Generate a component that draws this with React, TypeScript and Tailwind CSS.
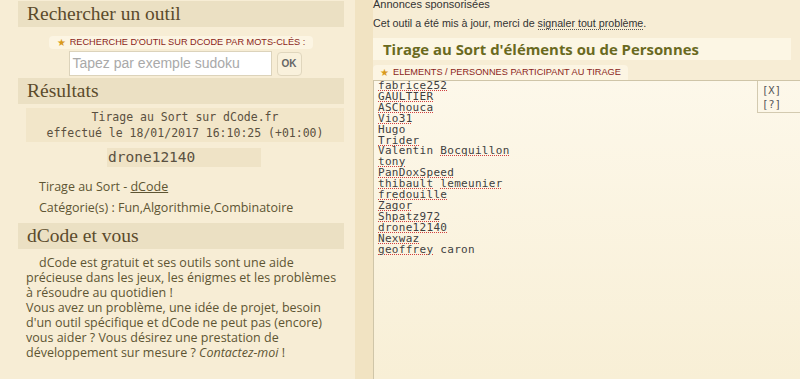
import React from "react";

const names: { w: string; bad?: boolean }[][] = [
  [{ w: "fabrice252", bad: true }],
  [{ w: "GAULTIER", bad: true }],
  [{ w: "ASChouca", bad: true }],
  [{ w: "Vio31", bad: true }],
  [{ w: "Hugo" }],
  [{ w: "Trider", bad: true }],
  [{ w: "Valentin" }, { w: "Bocquillon", bad: true }],
  [{ w: "tony", bad: true }],
  [{ w: "PanDoxSpeed", bad: true }],
  [{ w: "thibault", bad: true }, { w: "lemeunier", bad: true }],
  [{ w: "fredouille", bad: true }],
  [{ w: "Zagor", bad: true }],
  [{ w: "Shpatz972", bad: true }],
  [{ w: "drone12140", bad: true }],
  [{ w: "Nexwaz", bad: true }],
  [{ w: "geoffrey", bad: true }, { w: "caron" }],
];

function Header({ children }: { children: React.ReactNode }) {
  return (
    <div className="h-[26px] bg-[#ebe0c3] pl-[9px] text-[19.5px] leading-[26px] text-[#5b4b2c] [font-family:'Liberation_Serif',serif]">
      {children}
    </div>
  );
}

function Star() {
  return <span className="text-[#d99a1c] text-[10px] mr-[4px]">★</span>;
}

export default function App() {
  return (
    <div className="w-[800px] h-[379px] overflow-hidden flex bg-[#f7edd5] [font-family:'Open_Sans',sans-serif]">
      {/* Left column */}
      <div className="w-[355px] shrink-0 pl-[18px] pr-[11px] pt-px">
        <Header>Rechercher un outil</Header>

        <div className="flex flex-col items-center mt-[9px]">
          <div className="bg-[#fcf5e3] rounded-[4px] px-[8px] h-[13px] flex items-center text-[9.2px] text-[#8b1f1a] [font-family:'Liberation_Sans',sans-serif] uppercase">
            <Star />
            Recherche d'outil sur dCode par mots-clés :
          </div>
          <div className="flex items-center gap-[5px] mt-[2px] ml-[8px]">
            <div className="w-[203px] h-[25px] bg-white border border-[#dcd3bb] flex items-center pl-[3px] text-[14px] text-[#a9a9a9] [font-family:'Liberation_Sans',sans-serif]">
              Tapez par exemple sudoku
            </div>
            <div className="w-[25px] h-[24px] rounded-[4px] border border-[#e0d6bd] bg-[#f9f1dc] flex items-center justify-center text-[10px] font-bold text-[#666] [font-family:'Liberation_Sans',sans-serif]">
              OK
            </div>
          </div>
        </div>

        <div className="mt-[2px]">
          <Header>Résultats</Header>
        </div>

        <div className="ml-[8px] mt-[4px] h-[34px] bg-[#f2e6c9] flex flex-col items-center justify-center text-[11.5px] leading-[16px] text-[#5a5040] [font-family:'DejaVu_Sans_Mono',monospace]">
          <div>Tirage au Sort sur dCode.fr</div>
          <div>effectué le 18/01/2017 16:10:25 (+01:00)</div>
        </div>

        <div className="ml-[89px] mt-[6px] w-[154px] h-[19px] bg-[#efe3c6] pl-[1px] text-[14.5px] leading-[19px] text-[#5a5040] [font-family:'DejaVu_Sans_Mono',monospace]">
          drone12140
        </div>

        <div className="pl-[21px] mt-[9px] text-[12.5px] text-[#5e5533] leading-[21px]">
          <div>
            Tirage au Sort - <span className="underline">dCode</span>
          </div>
          <div>Catégorie(s) : Fun,Algorithmie,Combinatoire</div>
        </div>

        <div className="mt-[5px]">
          <Header>dCode et vous</Header>
        </div>

        <p className="pl-[8px] mt-[6px] text-[12.5px] leading-[15px] text-[#5e5533] indent-[13px]">
          dCode est gratuit et ses outils sont une aide précieuse dans les jeux, les énigmes et les problèmes à résoudre au quotidien !
          <br />
          <span className="inline-block indent-0">
            Vous avez un problème, une idée de projet, besoin d'un outil spécifique et dCode ne peut pas (encore) vous aider ? Vous désirez une prestation de développement sur mesure ? <i>Contactez-moi</i> !
          </span>
        </p>
      </div>

      {/* Separator strip */}
      <div className="w-[18px] shrink-0 bg-[#f1e3c2]" />

      {/* Right column */}
      <div className="flex-1 min-w-0 flex flex-col">
        <div className="mt-[-2px] text-[11px] leading-[13px] text-[#333] [font-family:'Liberation_Sans',sans-serif]">
          Annonces sponsorisées
        </div>
        <div className="mt-[6px] text-[10.7px] leading-[13px] text-[#333] [font-family:'Liberation_Sans',sans-serif]">
          Cet outil a été mis à jour, merci de{" "}
          <span className="border-b border-dotted border-[#555]">signaler tout problème</span>.
        </div>

        <div className="mt-[8px] w-[418px] h-[22px] bg-[#fcf6e4] pl-[10px] text-[14.9px] font-bold leading-[22px] text-[#6a6a1f]">
          Tirage au Sort d'éléments ou de Personnes
        </div>

        <div className="mt-[5px] self-start bg-[#fcf5e3] rounded-t-[4px] px-[7px] h-[15px] flex items-center text-[9.2px] text-[#8b1f1a] [font-family:'Liberation_Sans',sans-serif] uppercase">
          <Star />
          Elements / Personnes participant au tirage
        </div>

        <div className="flex-1 relative border-t border-l border-[#cfc5a8] bg-linear-to-b from-[#fdf8ea] to-[#f8efd6] pl-[4px] pt-0 text-[11px] tracking-[0.3px] leading-[10.9px] text-[#3f3f3f] [font-family:'DejaVu_Sans_Mono',monospace]">
          {names.map((line, i) => (
            <div key={i} className="whitespace-pre">
              {line.map((t, j) => (
                <React.Fragment key={j}>
                  {j > 0 && " "}
                  {t.bad ? (
                    <span className="underline decoration-dotted decoration-[#d04040] decoration-1 underline-offset-[1px]">
                      {t.w}
                    </span>
                  ) : (
                    t.w
                  )}
                </React.Fragment>
              ))}
            </div>
          ))}

          <div className="absolute top-0 right-0 w-[43px] h-[32px] border-l border-b border-[#d3cab0] pl-[4px] pt-[2px] text-[10.5px] leading-[14px] tracking-normal text-[#555]">
            <div>[X]</div>
            <div>[?]</div>
          </div>
        </div>
      </div>
    </div>
  );
}
